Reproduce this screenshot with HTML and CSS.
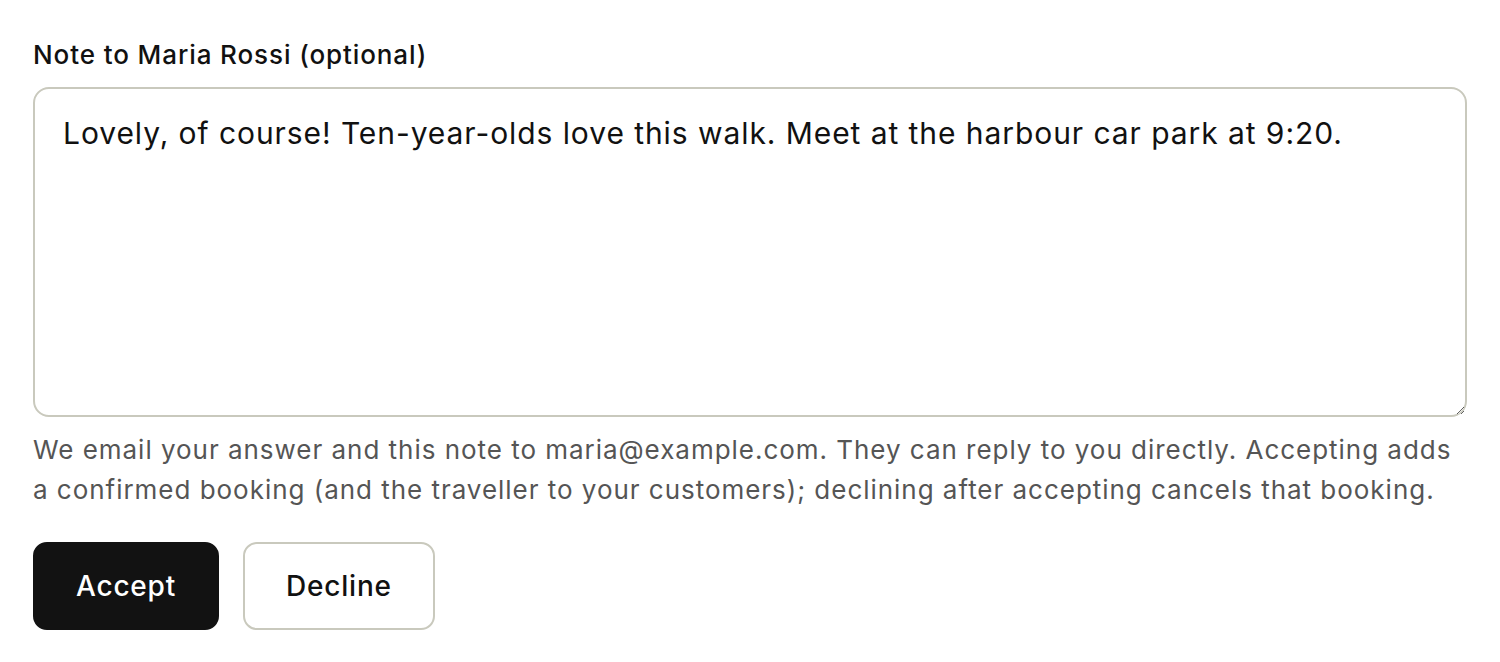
FILE: index.html
```html
<!DOCTYPE html>
<html lang="en">
<head>
<meta charset="utf-8">
<title>Note</title>
<link rel="stylesheet" href="styles.css">
</head>
<body>
<form class="note-form">
  <label class="note-label" for="note">Note to Maria Rossi (optional)</label>
  <textarea id="note" class="note-input">Lovely, of course! Ten-year-olds love this walk. Meet at the harbour car park at 9:20.</textarea>
  <p class="note-hint">We email your answer and this note to maria@example.com. They can reply to you directly. Accepting adds a confirmed booking (and the traveller to your customers); declining after accepting cancels that booking.</p>
  <div class="actions">
    <button type="button" class="btn btn-primary">Accept</button>
    <button type="button" class="btn btn-secondary">Decline</button>
  </div>
</form>
</body>
</html>
```

FILE: styles.css
```css
html, body {
  margin: 0;
  background: #ffffff;
}
body {
  font-family: Inter, "Noto Sans", sans-serif;
  color: #111111;
  letter-spacing: 0.9px;
}
.note-form {
  padding: 37px 33px 32px 33px;
  display: flex;
  flex-direction: column;
}
.note-label {
  font-size: 26px;
  font-weight: 500;
  line-height: 36px;
  color: #111111;
  margin-bottom: 14px;
}
.note-input {
  box-sizing: border-box;
  width: 100%;
  height: 330px;
  border: 2px solid #c9c9bd;
  border-radius: 16px;
  padding: 22px 28px;
  font-family: Inter, "Noto Sans", sans-serif;
  font-size: 30px;
  letter-spacing: 0.93px;
  line-height: 44px;
  color: #111111;
  background: #ffffff;
  outline: none;
  margin: 0;
}
.note-hint {
  margin: 13px 0 0 0;
  font-size: 26px;
  line-height: 40px;
  letter-spacing: 0.97px;
  color: #555555;
}
.actions {
  display: flex;
  gap: 24px;
  margin-top: 32px;
}
.btn {
  box-sizing: border-box;
  height: 88px;
  padding: 0 41px;
  border-radius: 14px;
  font-family: Inter, "Noto Sans", sans-serif;
  font-size: 28px;
  font-weight: 500;
  letter-spacing: 0.8px;
  cursor: pointer;
}
.btn-primary {
  background: #121212;
  color: #ffffff;
  border: 2px solid #121212;
}
.btn-secondary {
  background: #ffffff;
  color: #111111;
  border: 2px solid #c9c9bd;
}
```
